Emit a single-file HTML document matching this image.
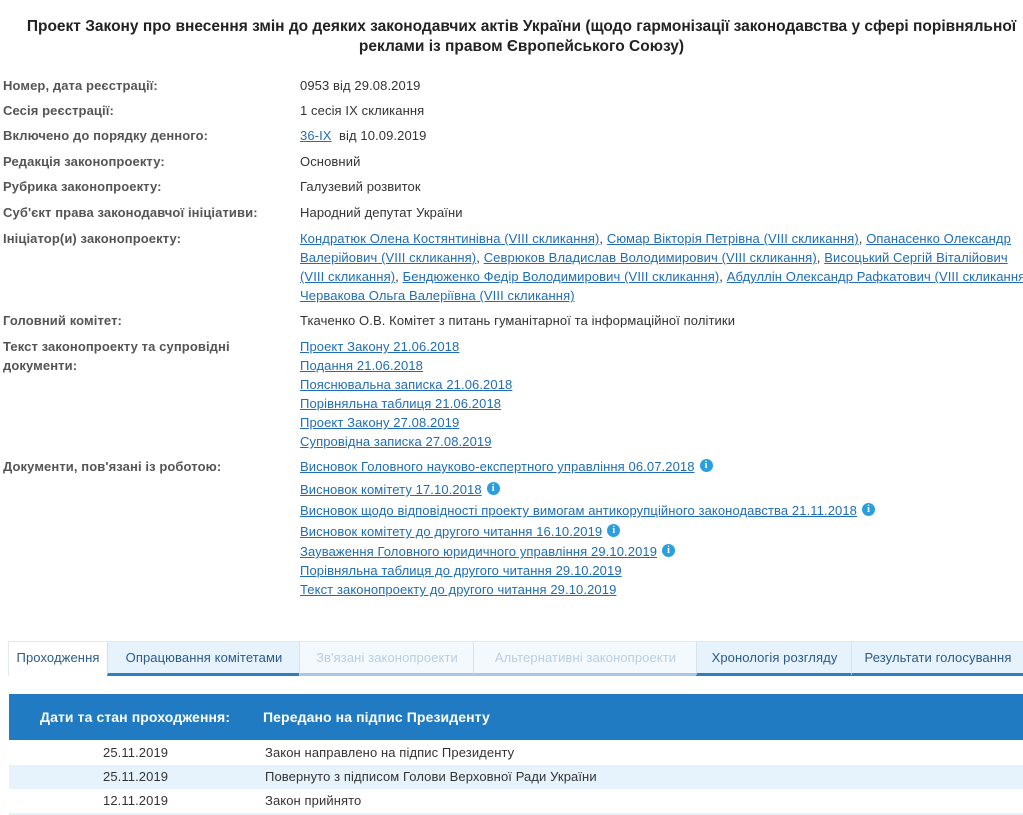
<!DOCTYPE html>
<html><head><meta charset="utf-8"><style>
body{margin:0;width:1023px;height:815px;overflow:hidden;background:#fff;font-family:"Liberation Sans",Arial,sans-serif;font-size:13px;color:#333;position:relative;letter-spacing:0.1px}
.a{position:absolute;white-space:nowrap;line-height:19px}
.l{left:3px;font-weight:bold;color:#555}
.v{left:300px}
a{color:#1f6db3;text-decoration:underline}
.t{position:absolute;left:10px;width:1023px;text-align:center;font-weight:bold;font-size:15.5px;color:#222;line-height:20px;top:17px;letter-spacing:0;white-space:nowrap}
.i{display:inline-block;width:13px;height:13px;border-radius:50%;background:#2a9fe0;color:#fff;font-size:10px;font-weight:bold;line-height:13px;text-align:center;vertical-align:3px;margin-left:5px;font-family:"Liberation Serif",serif}
.tabs{position:absolute;top:641px;left:8px;right:0;height:33px;border-top:1px solid #e3e9ee}
.tab{position:absolute;top:0;height:31px;line-height:31px;text-align:center;font-size:13px;background:#e6f3fc;color:#2b5a86;border-bottom:3px solid #2e7fc0;border-left:1px solid #d6e2ec}
.tab.dis{color:#b8cfe2;background:#f4f9fd;border-bottom-color:#a9c7e0}
.tab.act{background:#fff;border-bottom:none;border-left:1px solid #e3e9ee;color:#2b5a86;height:34px}
.hd{position:absolute;top:694px;left:9px;width:1014px;height:46px;background:#217bc2;color:#fff;font-weight:bold;font-size:14px}
.r{position:absolute;left:9px;width:1014px;height:24px;line-height:24px}
</style></head><body>
<div class="t">Проект Закону про внесення змін до деяких законодавчих актів України (щодо гармонізації законодавства у сфері порівняльної<br>реклами із правом Європейського Союзу)</div>

<div class="a l" style="top:76px">Номер, дата реєстрації:</div><div class="a v" style="top:76px">0953 від 29.08.2019</div>
<div class="a l" style="top:101px">Сесія реєстрації:</div><div class="a v" style="top:101px">1 сесія IX скликання</div>
<div class="a l" style="top:126px">Включено до порядку денного:</div><div class="a v" style="top:126px"><a>36-IX</a>&nbsp; від 10.09.2019</div>
<div class="a l" style="top:152px">Редакція законопроекту:</div><div class="a v" style="top:152px">Основний</div>
<div class="a l" style="top:177px">Рубрика законопроекту:</div><div class="a v" style="top:177px">Галузевий розвиток</div>
<div class="a l" style="top:203px">Суб'єкт права законодавчої ініціативи:</div><div class="a v" style="top:203px">Народний депутат України</div>
<div class="a l" style="top:229px">Ініціатор(и) законопроекту:</div>
<div class="a v" style="top:229px"><a>Кондратюк Олена Костянтинівна (VIII скликання)</a>, <a>Сюмар Вікторія Петрівна (VIII скликання)</a>, <a>Опанасенко Олександр</a><br><a>Валерійович (VIII скликання)</a>, <a>Севрюков Владислав Володимирович (VIII скликання)</a>, <a>Висоцький Сергій Віталійович</a><br><a>(VIII скликання)</a>, <a>Бендюженко Федір Володимирович (VIII скликання)</a>, <a>Абдуллін Олександр Рафкатович (VIII скликання)</a><br><a>Червакова Ольга Валеріївна (VIII скликання)</a></div>
<div class="a l" style="top:311px">Головний комітет:</div><div class="a v" style="top:311px">Ткаченко О.В. Комітет з питань гуманітарної та інформаційної політики</div>
<div class="a l" style="top:337px">Текст законопроекту та супровідні<br>документи:</div>
<div class="a v" style="top:337px"><a>Проект Закону 21.06.2018</a><br><a>Подання 21.06.2018</a><br><a>Пояснювальна записка 21.06.2018</a><br><a>Порівняльна таблиця 21.06.2018</a><br><a>Проект Закону 27.08.2019</a><br><a>Супровідна записка 27.08.2019</a></div>
<div class="a l" style="top:457px">Документи, пов'язані із роботою:</div>
<div class="a v" style="top:457px"><a>Висновок Головного науково-експертного управління 06.07.2018</a><span class="i">i</span></div>
<div class="a v" style="top:480px"><a>Висновок комітету 17.10.2018</a><span class="i">i</span></div>
<div class="a v" style="top:501px"><a>Висновок щодо відповідності проекту вимогам антикорупційного законодавства 21.11.2018</a><span class="i">i</span></div>
<div class="a v" style="top:522px"><a>Висновок комітету до другого читання 16.10.2019</a><span class="i">i</span></div>
<div class="a v" style="top:542px"><a>Зауваження Головного юридичного управління 29.10.2019</a><span class="i">i</span></div>
<div class="a v" style="top:561px"><a>Порівняльна таблиця до другого читання 29.10.2019</a></div>
<div class="a v" style="top:580px"><a>Текст законопроекту до другого читання 29.10.2019</a></div>

<div class="tabs">
<div class="tab act" style="left:0;width:98px">Проходження</div>
<div class="tab" style="left:99px;width:192px">Опрацювання комітетами</div>
<div class="tab dis" style="left:291px;width:174px">Зв'язані законопроекти</div>
<div class="tab dis" style="left:465px;width:223px">Альтернативні законопроекти</div>
<div class="tab" style="left:688px;width:155px">Хронологія розгляду</div>
<div class="tab" style="left:843px;width:172px">Результати голосування</div>
</div>
<div class="hd"><span style="position:absolute;left:31px;top:15px">Дати та стан проходження:</span><span style="position:absolute;left:254px;top:15px">Передано на підпис Президенту</span></div>
<div class="r" style="top:741px"><span style="position:absolute;left:94px">25.11.2019</span><span style="position:absolute;left:256px">Закон направлено на підпис Президенту</span></div>
<div class="r" style="top:765px;background:#e6f3fc"><span style="position:absolute;left:94px">25.11.2019</span><span style="position:absolute;left:256px">Повернуто з підписом Голови Верховної Ради України</span></div>
<div class="r" style="top:789px"><span style="position:absolute;left:94px">12.11.2019</span><span style="position:absolute;left:256px">Закон прийнято</span></div>
<div class="r" style="top:813px;height:2px;background:#e6f3fc"></div>
</body></html>
